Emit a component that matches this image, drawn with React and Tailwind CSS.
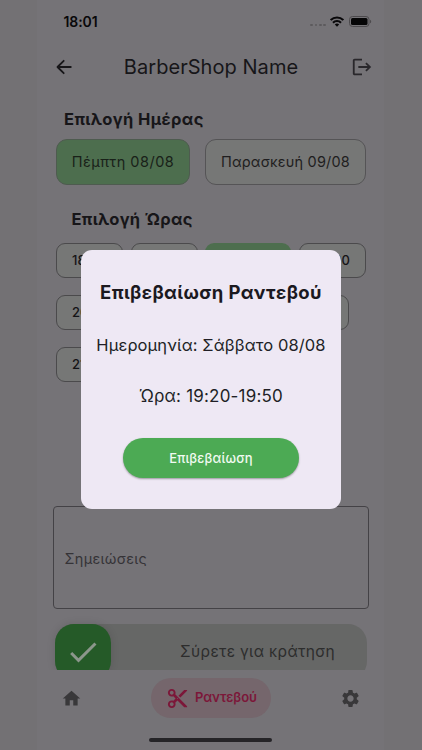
import React from "react";
import { MdLogout, MdCheck, MdHome, MdContentCut, MdSettings } from "react-icons/md";

function StatusBar() {
  return (
    <div className="flex h-[43px] shrink-0 items-end justify-between pl-[26.5px] pr-[12.5px]">
      <span className="mb-[12px] text-[14px] font-semibold leading-[19px] tracking-[-0.1px] text-[#09080a]">18:01</span>
      <div className="mb-[16px] flex items-center">
        <div className="mr-[4px] mt-[7px] flex gap-[1.5px]">
          {[0, 1, 2, 3].map((i) => (
            <span key={i} className="size-[2.8px] rounded-full bg-[#5c5a5d]" />
          ))}
        </div>
        <svg width="14" height="11" viewBox="0 0 14 11" fill="none" stroke="#09080a" strokeWidth="2.1">
          <path d="M0.7 4.1a8.9 8.9 0 0 1 12.6 0" />
          <path d="M3 6.7a5.6 5.6 0 0 1 8 0" />
          <path d="M7 10.8l-2.2-2.2a3.1 3.1 0 0 1 4.4 0z" fill="#09080a" stroke="none" />
        </svg>
        <svg className="ml-[4.5px]" width="23" height="11" viewBox="0 0 23 11">
          <rect x="0.5" y="0.5" width="19.5" height="10" rx="3" fill="none" stroke="#4c4a4d" />
          <rect x="2" y="2" width="16.5" height="7" rx="1.5" fill="#050506" />
          <path d="M21 3.7c1.6.5 1.6 3.1 0 3.6z" fill="#4c4a4d" />
        </svg>
      </div>
    </div>
  );
}

function Header() {
  return (
    <div className="flex h-[48px] shrink-0 items-center justify-between pl-[19px] pr-[11px]">
      <svg width="16" height="16" viewBox="0 0 16 16" fill="none" stroke="#171619" strokeWidth="1.8" strokeLinecap="round" strokeLinejoin="round">
        <path d="M7.7 1.8L1.5 8l6.2 6.2M2 8h12.8" />
      </svg>
      <h1 className="whitespace-nowrap pr-[1px] text-[20px] font-normal leading-[26px] tracking-[0.05px] text-[#171619]">BarberShop Name</h1>
      <MdLogout className="size-[22px] text-[#29272b]" />
    </div>
  );
}

const slot = "h-[35px] shrink-0 rounded-[9px] border border-[#4b4a4c] bg-[#767776] pl-[15px] text-left text-[13px] font-medium text-[#151416]";

function Slots() {
  return (
    <div className="mt-[11px] flex flex-col gap-[17px] pl-[19px]">
      <div className="flex gap-[7.5px]">
        <button className={`${slot} w-[67px]`}>18:00</button>
        <button className={`${slot} w-[67px]`}>18:40</button>
        <button className="h-[35px] w-[86px] rounded-[9px] bg-[#4d6e4e] text-[13px] text-[#151416]">19:20</button>
        <button className={`${slot} w-[67px] !pl-0 !pr-[14.5px] !text-right`}>20:00</button>
      </div>
      <div className="flex gap-[7px]">
        <button className={`${slot} w-[90px]`}>20:10</button>
        <button className={`${slot} w-[90px]`}>20:30</button>
        <button className={`${slot} w-[99px]`}>20:50</button>
      </div>
      <div className="flex">
        <button className={`${slot} w-[90px]`}>21:10</button>
      </div>
    </div>
  );
}

function BottomNav() {
  return (
    <nav className="flex h-[80px] shrink-0 flex-col items-center bg-[#757377]">
      <div className="flex h-[56px] w-full items-center justify-between pl-[24px] pr-[23px]">
        <MdHome className="size-[21px] text-[#39383a]" />
        <div className="flex h-[40px] w-[120px] items-center rounded-full bg-[#75666c] pl-[15px]">
          <MdContentCut className="size-[23px] text-[#7c1739]" />
          <span className="ml-[6px] whitespace-nowrap text-[13px] font-semibold tracking-[-0.1px] text-[#7c1739]">Ραντεβού</span>
        </div>
        <MdSettings className="size-[21px] text-[#39383a]" />
      </div>
      <div className="mt-[12px] h-[4px] w-[123px] rounded-full bg-[#252427]" />
    </nav>
  );
}

function ConfirmDialog() {
  return (
    <div className="absolute left-[81px] top-[250px] flex h-[259px] w-[260px] flex-col items-center rounded-[11px] bg-[#eee8f4] text-[#211f26]">
      <h2 className="mt-[29px] whitespace-nowrap text-[18.5px] font-bold leading-[26px] tracking-[0.4px] text-[#1b191f]">Επιβεβαίωση Ραντεβού</h2>
      <p className="mt-[27px] whitespace-nowrap text-[16.5px] leading-[26px] tracking-[0.1px]">Ημερομηνία: Σάββατο 08/08</p>
      <p className="mt-[25px] whitespace-nowrap text-[17px] leading-[26px] tracking-[0.2px]">Ώρα: 19:20-19:50</p>
      <button className="mt-[29px] h-[40px] w-[176px] whitespace-nowrap rounded-full bg-[#4caa54] pt-[1px] text-[13px] font-medium tracking-[0.2px] text-[#f1faf1] shadow-[0_1px_2px_rgba(0,0,0,0.35)]">Επιβεβαίωση</button>
    </div>
  );
}

export default function App() {
  return (
    <div className="relative flex h-[750px] w-[422px] overflow-hidden bg-[#737174] pl-[37px] font-[Inter,'Liberation_Sans',sans-serif]">
      <main className="flex h-full w-[347px] shrink-0 flex-col bg-[#757377]">
        <StatusBar />
        <Header />
        <div className="flex min-h-0 flex-1 flex-col overflow-hidden">
          <h2 className="mt-[15px] whitespace-nowrap pl-[27px] text-[16.5px] font-bold leading-[26px] tracking-[0.4px] text-[#171619]">Επιλογή Ημέρας</h2>
          <div className="mt-[7px] flex gap-[15px] pl-[19px]">
            <button className="h-[46px] w-[134px] shrink-0 whitespace-nowrap rounded-[11px] border border-[#4e5b4f] bg-[#4d6e4e] text-[14.5px] tracking-[0.5px] text-[#192119]">Πέμπτη 08/08</button>
            <button className="h-[46px] w-[161px] shrink-0 whitespace-nowrap rounded-[11px] border border-[#555456] bg-[#767776] text-[14.5px] tracking-[0.2px] text-[#1f1e20]">Παρασκευή 09/08</button>
          </div>
          <h2 className="mt-[21px] whitespace-nowrap pl-[34.5px] text-[16.5px] font-bold leading-[26px] tracking-[0.3px] text-[#171619]">Επιλογή Ώρας</h2>
          <Slots />
          <div className="ml-[16px] mt-[124px] flex h-[103px] w-[316px] shrink-0 items-center rounded-[4px] border border-[#444246] pl-[10.5px] pt-[2px] text-[14.5px] tracking-[0.3px] text-[#353337]">Σημειώσεις</div>
          <div className="ml-[18px] mt-[15px] flex h-[56px] w-[312px] shrink-0 items-center rounded-[19px] bg-[#666766]">
            <div className="flex h-[56px] w-[56px] shrink-0 items-center justify-center rounded-[19px] bg-[#255a28] shadow-[0_0_8px_rgba(0,0,0,0.12)]">
              <MdCheck className="size-[36px] text-[#8c968c]" />
            </div>
            <span className="ml-[69px] whitespace-nowrap text-[15.5px] tracking-[0.35px] text-[#2d2d2d]">Σύρετε για κράτηση</span>
          </div>
        </div>
        <BottomNav />
      </main>
      <ConfirmDialog />
    </div>
  );
}
